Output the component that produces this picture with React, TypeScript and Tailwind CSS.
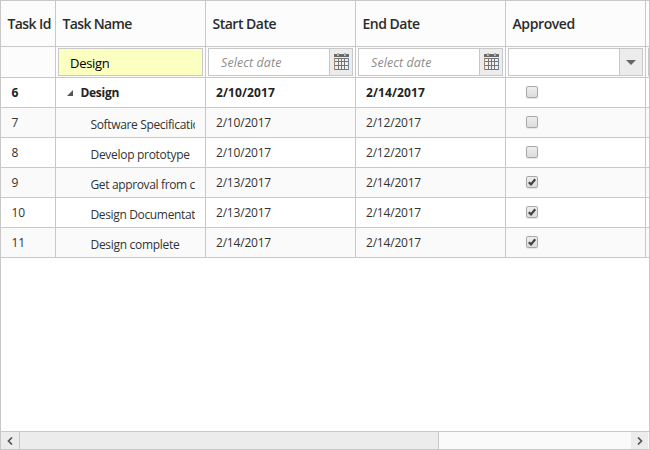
import React from "react";

type Task = {
  id: number;
  name: string;
  nameTracking: string;
  start: string;
  end: string;
  approved: boolean;
  parent?: boolean;
};

const tasks: Task[] = [
  { id: 6, name: "Design", nameTracking: "tracking-[-0.3px]", start: "2/10/2017", end: "2/14/2017", approved: false, parent: true },
  { id: 7, name: "Software Specification", nameTracking: "tracking-[-0.35px]", start: "2/10/2017", end: "2/12/2017", approved: false },
  { id: 8, name: "Develop prototype", nameTracking: "tracking-[-0.3px]", start: "2/10/2017", end: "2/12/2017", approved: false },
  { id: 9, name: "Get approval from customer", nameTracking: "tracking-[-0.36px]", start: "2/13/2017", end: "2/14/2017", approved: true },
  { id: 10, name: "Design Documentation", nameTracking: "tracking-[-0.35px]", start: "2/13/2017", end: "2/14/2017", approved: true },
  { id: 11, name: "Design complete", nameTracking: "tracking-[-0.3px]", start: "2/14/2017", end: "2/14/2017", approved: true },
];

const grid = "grid grid-cols-[55px_150px_150px_150px_140px_3px] border-b border-[#c8c8c8]";
const cell = "min-w-0 overflow-hidden border-r border-[#c8c8c8]";

function CalendarIcon() {
  return (
    <svg width="15" height="17" viewBox="0 0 15 17" shapeRendering="crispEdges">
      <path d="M0 1h15v3H0z" fill="#696969" />
      <path d="M3 0h1v3H3zM10 0h1v3h-1z" fill="#9fc4dc" />
      <path d="M4 0h1v3H4zM11 0h1v3h-1z" fill="#c9a27c" />
      <path d="M0 5h15v12H0z" fill="#747474" />
      <path d="M0 5h1v12H0z" fill="#a68468" />
      <path d="M14 5h1v12h-1z" fill="#6489a8" />
      <path
        d="M1 6h3v2H1zM5 6h2v2H5zM8 6h2v2H8zM11 6h3v2h-3zM1 9h3v3H1zM5 9h2v3H5zM8 9h2v3H8zM11 9h3v3h-3zM1 13h3v3H1zM5 13h2v3H5zM8 13h2v3H8zM11 13h3v3h-3z"
        fill="#f0f0f0"
      />
    </svg>
  );
}

function DateFilter() {
  return (
    <div className={`${cell} pt-px pl-0.5`}>
      <div className="flex h-7 w-[145px] border border-[#c8c8c8] bg-white">
        <span className="flex-1 pt-[5px] pl-3 text-[12.5px] leading-[18px] tracking-[0.08px] text-[#8c8c8c] italic">Select date</span>
        <span className="flex w-[23px] justify-center border-l border-[#c8c8c8] bg-[#ececec] pt-1">
          <CalendarIcon />
        </span>
      </div>
    </div>
  );
}

function Checkbox({ checked }: { checked: boolean }) {
  return (
    <span className="block h-3 w-3 rounded-[2px] border border-[#a8a8a8] bg-linear-to-b from-[#eeeeee] to-[#dcdcdc] shadow-[0_1px_1px_#e5e5e5]">
      {checked && (
        <svg width="10" height="10" viewBox="0 0 10 10" className="block">
          <path d="M1.8 5.2 4 7.4 8.2 2.3" fill="none" stroke="#424242" strokeWidth="2.2" />
        </svg>
      )}
    </span>
  );
}

function Header({ label, tracking }: { label: string; tracking: string }) {
  return <div className={`${cell} pt-[13px] pl-[6.5px] text-sm leading-5 font-semibold whitespace-nowrap ${tracking}`}>{label}</div>;
}

function Row({ task, odd }: { task: Task; odd: boolean }) {
  const text = `${cell} pt-1.5 leading-[18px]`;
  const dates = task.parent ? "tracking-[0.1px]" : "tracking-[-0.2px]";
  return (
    <div className={`${grid} h-[30px] text-xs ${odd ? "bg-[#fafafa]" : "bg-white"} ${task.parent ? "font-bold text-[#222]" : "text-[#333]"}`}>
      <div className={`${text} pl-[10.5px] ${dates}`}>{task.id}</div>
      <div className={`${cell} pr-2.5 leading-[18px]`}>
        {task.parent ? (
          <div className="flex pt-1.5 pl-[11px]">
            <svg width="6" height="6" className="mt-1.5 mr-[7.5px]">
              <path d="M6 0v6H0z" fill="#555" />
            </svg>
            <span className={task.nameTracking}>{task.name}</span>
          </div>
        ) : (
          <div className={`ml-[34.5px] overflow-hidden pt-2 whitespace-nowrap ${task.nameTracking}`}>{task.name}</div>
        )}
      </div>
      <div className={`${text} pl-2.5 ${dates}`}>{task.start}</div>
      <div className={`${text} pl-2.5 ${dates}`}>{task.end}</div>
      <div className={`${cell} pt-2 pl-5`}>
        <Checkbox checked={task.approved} />
      </div>
      <div />
    </div>
  );
}

export default function App() {
  return (
    <div className="flex h-[450px] w-[650px] flex-col overflow-hidden border border-[#c8c8c8] bg-white font-['Open_Sans',sans-serif]">
      <div className={`${grid} h-[46px] shrink-0 bg-[#fcfcfc] text-[#2b2b2b]`}>
        <Header label="Task Id" tracking="tracking-[-0.6px]" />
        <Header label="Task Name" tracking="tracking-[-0.65px]" />
        <Header label="Start Date" tracking="tracking-[-0.5px]" />
        <Header label="End Date" tracking="tracking-[-0.5px]" />
        <Header label="Approved" tracking="tracking-[-0.4px]" />
        <div />
      </div>
      <div className={`${grid} h-[31px] shrink-0 bg-[#fcfcfc]`}>
        <div className={cell} />
        <div className={`${cell} pt-px pl-0.5`}>
          <div className="h-7 w-[145px] border border-[#c8c8c8] bg-[#fbffbf] pt-[5px] pl-[11px] text-[13px] leading-[18px] tracking-[-0.3px] text-black">Design</div>
        </div>
        <DateFilter />
        <DateFilter />
        <div className={`${cell} pt-px pl-0.5`}>
          <div className="flex h-7 w-[135px] justify-end border border-[#c8c8c8] bg-white">
            <span className="flex w-[23px] items-center justify-center border-l border-[#c8c8c8] bg-[#ececec]">
              <svg width="10" height="5">
                <path d="M0 0h10L5 5z" fill="#666" />
              </svg>
            </span>
          </div>
        </div>
        <div className="flex justify-end pt-px">
          <span className="h-7 w-px bg-[#c8c8c8]" />
        </div>
      </div>
      {tasks.map((task, i) => (
        <Row key={task.id} task={task} odd={i % 2 === 1} />
      ))}
      <div className="flex-1" />
      <div className="flex h-[18px] shrink-0 border-t border-[#c8c8c8] bg-[#fafafa]">
        <span className="flex w-[19px] items-center justify-center border-r border-[#c8c8c8] bg-[#ececec]">
          <svg width="6" height="8" viewBox="0 0 6 8">
            <path d="M5 0.5 1.5 4 5 7.5" fill="none" stroke="#555" strokeWidth="1.7" />
          </svg>
        </span>
        <span className="w-[419px] border-r border-[#c8c8c8] bg-[#ececec]" />
        <span className="flex-1" />
        <span className="flex w-[17px] items-center justify-center bg-[#ececec]">
          <svg width="6" height="8" viewBox="0 0 6 8">
            <path d="M1 0.5 4.5 4 1 7.5" fill="none" stroke="#555" strokeWidth="1.7" />
          </svg>
        </span>
        <span className="w-px" />
      </div>
    </div>
  );
}
